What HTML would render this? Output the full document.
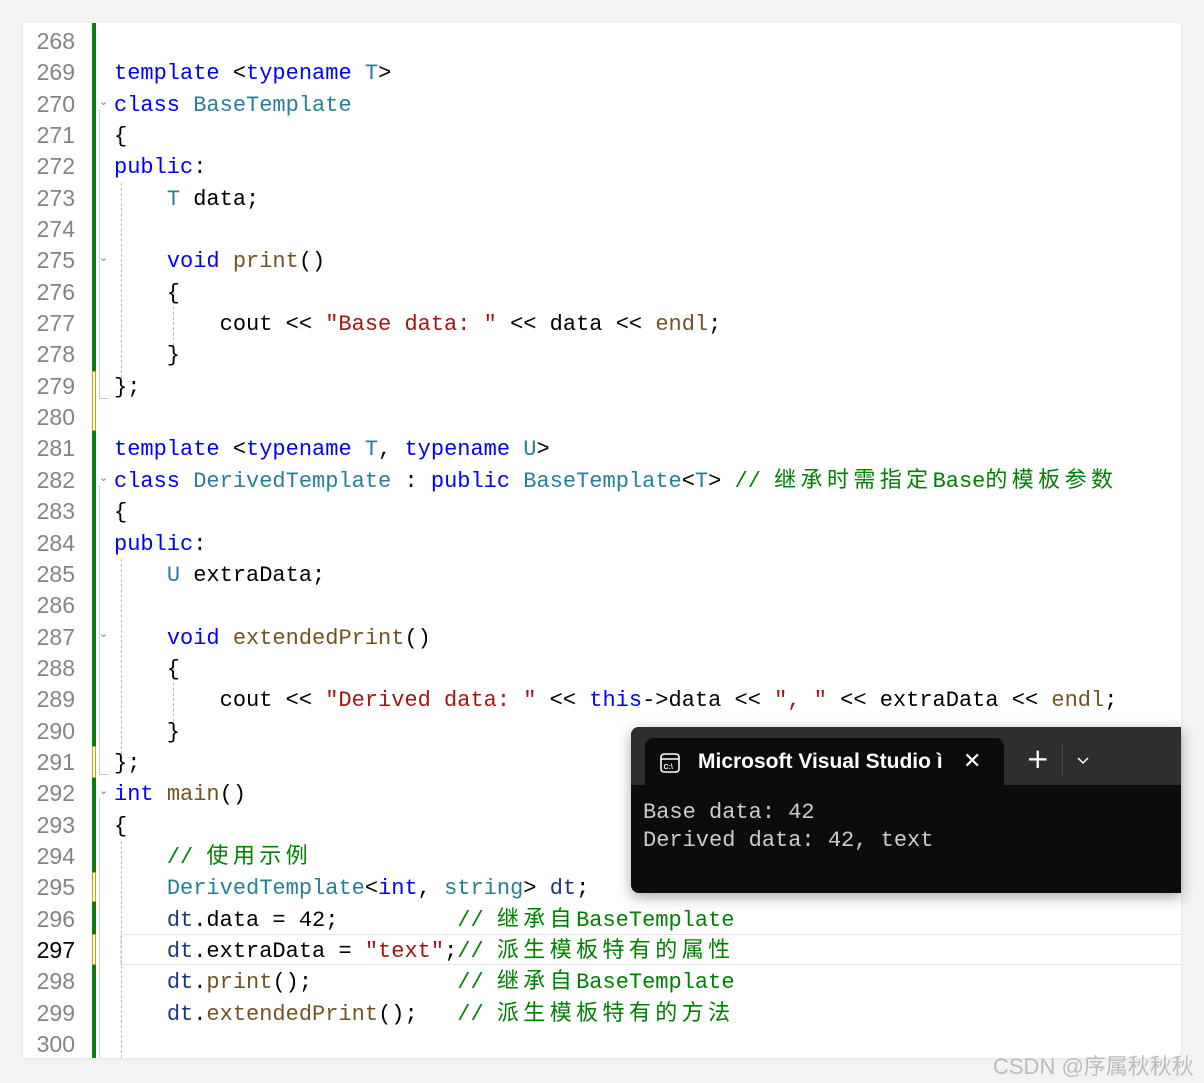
<!DOCTYPE html>
<html><head><meta charset="utf-8"><style>
body{margin:0;width:1204px;height:1083px;background:#f3f3f3;position:relative;overflow:hidden;font-family:"Liberation Mono","Noto Sans CJK SC",monospace}
#ed{position:absolute;left:23px;top:23px;width:1158px;height:1035px;background:#fff;box-shadow:0 1px 3px rgba(0,0,0,.08)}
.ln{position:absolute;left:0;width:53px;text-align:right;font-family:"Liberation Sans","DejaVu Sans",sans-serif;font-size:23px;color:#848484;line-height:31.34px}
.code{position:absolute;left:114px;top:27px;font-size:22px;line-height:31.34px;white-space:pre;color:#000}
.k{color:#0000ff}.t{color:#267f99}.f{color:#74531f}.s{color:#a31515}.c{color:#008000}.v{color:#1f377f}
.cj{letter-spacing:4.4px}
.bar{position:absolute;left:69px;width:4px;background:#107c10}
.ybar{position:absolute;left:69px;width:4px;background:#fff;box-sizing:border-box;border:1px solid #c8a200}
.g{position:absolute;border-left:1px dashed #bbb}
.fold{position:absolute;left:76px;font-size:11px;color:#777;font-family:"DejaVu Sans",sans-serif}
#term{position:absolute;left:631px;top:727px;width:550px;height:166px;background:#0c0c0c;border-radius:8px 0 0 8px;box-shadow:0 4px 14px rgba(0,0,0,.35);overflow:hidden}
#tb{position:absolute;left:0;top:0;right:0;height:58px;background:#2e2e2e}
#tab{position:absolute;left:14px;top:11px;width:359px;height:50px;background:#0c0c0c;border-radius:8px 8px 0 0;color:#fff;font-family:"Liberation Sans","DejaVu Sans",sans-serif;font-size:21px;font-weight:bold}
.out{position:absolute;left:12px;color:#cccccc;font-size:22px;line-height:28px;white-space:pre}
</style></head><body>
<div id="ed">
<div class="bar" style="top:0;height:1035px"></div>
<div class="ybar" style="top:348px;height:60px"></div>
<div class="ybar" style="top:723px;height:32px"></div>
<div class="ybar" style="top:849px;height:30px"></div>
<div class="ybar" style="top:911px;height:31px"></div>
<div class="g" style="left:76px;top:86px;height:290px;border-left:1px solid #ccc"></div>
<div class="g" style="left:76px;top:462px;height:290px;border-left:1px solid #ccc"></div>
<div class="g" style="left:76px;top:775px;height:260px;border-left:1px solid #ccc"></div>
<div class="g" style="left:76px;top:375px;width:10px;border-top:1px solid #ccc;border-left:none"></div>
<div class="g" style="left:76px;top:751px;width:10px;border-top:1px solid #ccc;border-left:none"></div>
<div class="g" style="left:98px;top:160px;height:200px"></div>
<div class="g" style="left:150px;top:268px;height:60px"></div>
<div class="g" style="left:98px;top:536px;height:200px"></div>
<div class="g" style="left:150px;top:644px;height:60px"></div>
<div class="g" style="left:98px;top:818px;height:217px"></div>
<div style="position:absolute;left:97px;top:911px;width:1061px;height:31px;border:1px solid #e4e4e4;border-right:none;box-sizing:border-box"></div>
<div class="fold" style="top:72px">⌄</div>
<div class="fold" style="top:228px">⌄</div>
<div class="fold" style="top:448px">⌄</div>
<div class="fold" style="top:604px">⌄</div>
<div class="fold" style="top:761px">⌄</div>
</div>
<div class="ln" style="left:22px;top:26px">268<br>269<br>270<br>271<br>272<br>273<br>274<br>275<br>276<br>277<br>278<br>279<br>280<br>281<br>282<br>283<br>284<br>285<br>286<br>287<br>288<br>289<br>290<br>291<br>292<br>293<br>294<br>295<br>296<br><span style="color:#000">297</span><br>298<br>299<br>300</div>
<div class="code">
<span class="k">template</span> &lt;<span class="k">typename</span> <span class="t">T</span>&gt;
<span class="k">class</span> <span class="t">BaseTemplate</span>
{
<span class="k">public</span>:
    <span class="t">T</span> data;

    <span class="k">void</span> <span class="f">print</span>()
    {
        cout &lt;&lt; <span class="s">"Base data: "</span> &lt;&lt; data &lt;&lt; <span class="f">endl</span>;
    }
};

<span class="k">template</span> &lt;<span class="k">typename</span> <span class="t">T</span>, <span class="k">typename</span> <span class="t">U</span>&gt;
<span class="k">class</span> <span class="t">DerivedTemplate</span> : <span class="k">public</span> <span class="t">BaseTemplate</span>&lt;<span class="t">T</span>&gt; <span class="c">// <span class="cj">继承时需指定</span>Base<span class="cj">的模板参数</span></span>
{
<span class="k">public</span>:
    <span class="t">U</span> extraData;

    <span class="k">void</span> <span class="f">extendedPrint</span>()
    {
        cout &lt;&lt; <span class="s">"Derived data: "</span> &lt;&lt; <span class="k">this</span>-&gt;data &lt;&lt; <span class="s">", "</span> &lt;&lt; extraData &lt;&lt; <span class="f">endl</span>;
    }
};
<span class="k">int</span> <span class="f">main</span>()
{
    <span class="c">// <span class="cj">使用示例</span></span>
    <span class="t">DerivedTemplate</span>&lt;<span class="k">int</span>, <span class="t">string</span>&gt; <span class="v">dt</span>;
    <span class="v">dt</span>.data = 42;         <span class="c">// <span class="cj">继承自</span>BaseTemplate</span>
    <span class="v">dt</span>.extraData = <span class="s">"text"</span>;<span class="c">// <span class="cj">派生模板特有的属性</span></span>
    <span class="v">dt</span>.<span class="f">print</span>();           <span class="c">// <span class="cj">继承自</span>BaseTemplate</span>
    <span class="v">dt</span>.<span class="f">extendedPrint</span>();   <span class="c">// <span class="cj">派生模板特有的方法</span></span>
</div>
<div id="term">
<div id="tb"></div>
<div style="position:absolute;left:431px;top:17px;width:1px;height:32px;background:#444"></div>
<div id="tab">
<svg style="position:absolute;left:14px;top:14px" width="22" height="22" viewBox="0 0 22 22"><rect x="2" y="2" width="18" height="18" rx="3" fill="none" stroke="#fff" stroke-width="1.6"/><line x1="2" y1="7" x2="20" y2="7" stroke="#fff" stroke-width="1.4"/><text x="4.5" y="17" font-size="7" fill="#fff" font-family="Liberation Sans">C:\</text></svg>
<span style="position:absolute;left:53px;top:12px">Microsoft Visual Studio ì</span>
<span style="position:absolute;left:318px;top:10px;font-weight:normal;font-size:22px">✕</span>
</div>
<div style="position:absolute;left:395px;top:18px;color:#fff;font-family:'DejaVu Sans',sans-serif;font-size:28px;line-height:28px">+</div>
<svg style="position:absolute;left:446px;top:30px" width="12" height="8"><path d="M1 1 L6 6 L11 1" fill="none" stroke="#fff" stroke-width="1.5"/></svg>
<div class="out" style="top:72px">Base data: 42
Derived data: 42, text</div>
</div>
<div style="position:absolute;left:993px;top:1049px;font-family:'Liberation Sans','Noto Sans CJK SC',sans-serif;font-size:22px;color:#bbb;white-space:nowrap">CSDN @序属秋秋秋</div>
</body></html>
